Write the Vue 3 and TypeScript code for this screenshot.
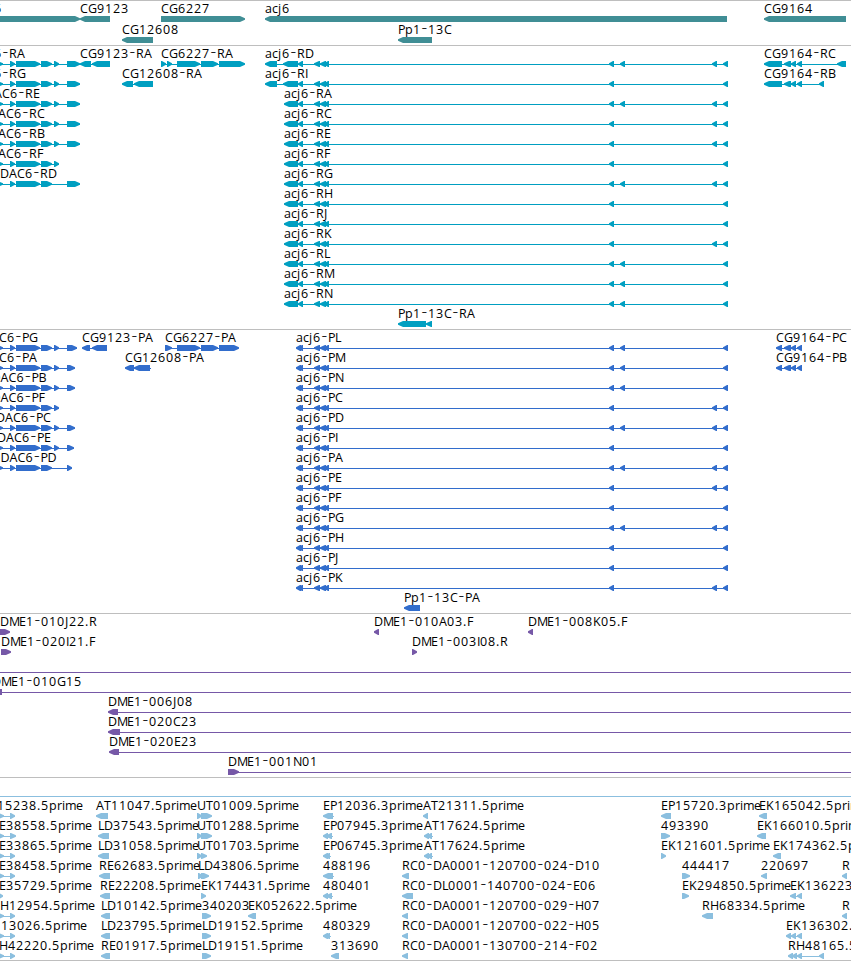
<script setup lang="ts">
type Span = [number, number]

interface Feature {
  row: number
  dir: 'l' | 'r'
  label: string
  x: number
  blocks: Span[]
  line?: Span
}

interface Track {
  name: string
  height: number
  baseline: number
  pitch: number
  features: Feature[]
}

interface Run {
  text: string
  xs: string
  dash: boolean
}

// Pen advance of each glyph, in pixels
const ADVANCE: Record<string, number> = {
  A: 8, B: 7, C: 8, D: 9, E: 7, F: 7, G: 9, H: 9, I: 3, J: 4, K: 8, L: 6, M: 10, N: 9,
  P: 7, R: 8, T: 7, U: 9, a: 7, c: 6, j: 4, p: 8, r: 5, i: 3, m: 11, e: 7, '-': 7, '.': 4,
}

// Splits a label at its hyphens, which are set in a larger size, and places every glyph
function runs(label: string, start: number): Run[] {
  let pen = start
  return label.split(/(-)/).filter(Boolean).map((text) => {
    const dash = text === '-'
    const xs = [...text]
      .map((ch) => {
        const at = pen
        pen += ADVANCE[ch] ?? 8
        return dash ? at + 0.6 : at
      })
      .join(' ')
    return { text, xs, dash }
  })
}

function arrow([a, b]: Span, dir: 'l' | 'r', y: number): string {
  const head = Math.min(5, b - a - 1)
  const tip = dir === 'l' ? a : b
  const neck = dir === 'l' ? a + head : b - head
  const tail = dir === 'l' ? b : a
  return `${tip},${y + 2.2} ${neck},${y} ${tail},${y} ${tail},${y + 6} ${neck},${y + 6} ${tip},${y + 3.8}`
}

function f(row: number, dir: 'l' | 'r', label: string, x: number, blocks: Span[], line?: Span): Feature {
  return { row, dir, label, x, blocks, line }
}

const hdacCore: Span[] = [[-3, 3], [10, 15], [16, 40], [41, 52]]
const hdacSmall: Span = [54, 59]

function hdac(row: number, suffix: string, x: number, small: boolean, last?: Span): Feature {
  const blocks = [...hdacCore]
  if (small) blocks.push(hdacSmall)
  if (last) blocks.push(last)
  return f(row, 'r', `HDAC6-${suffix}`, x, blocks, [0, blocks[blocks.length - 1][1]])
}

const exonSpan: Record<string, Span> = { a: [609, 614], b: [620, 625], c: [712, 717], d: [723, 728] }
const acjMid: Span[] = [[314, 320], [320, 326], [324, 329]]

function acj(row: number, suffix: string, exons: string, x: number, head: Span[]): Feature {
  return f(row, 'l', `acj6-${suffix}`, x, [...head, ...acjMid, ...[...exons].map((e) => exonSpan[e])], [x + 3, 728])
}

const longHead: Span[] = [[265, 277], [283, 298], [298, 303]]
const shortHead: Span[] = [[284, 298], [298, 303]]
const codingHead: Span[] = [[296, 301], [298, 303]]

const acjRna: [string, string][] = [
  ['RD', 'abcd'], ['RI', 'ad'], ['RA', 'abcd'], ['RC', 'acd'], ['RE', 'acd'], ['RF', 'ad'], ['RG', 'abcd'],
  ['RH', 'ad'], ['RJ', 'ad'], ['RK', 'acd'], ['RL', 'abd'], ['RM', 'abd'], ['RN', 'abd'],
]
const acjProtein: [string, string][] = [
  ['PL', 'abd'], ['PM', 'abd'], ['PN', 'abd'], ['PC', 'acd'], ['PD', 'abcd'], ['PI', 'ad'], ['PA', 'abcd'],
  ['PE', 'acd'], ['PF', 'ad'], ['PG', 'abcd'], ['PH', 'ad'], ['PJ', 'ad'], ['PK', 'acd'],
]

const cgTail: Span[] = [[784, 791], [791, 796], [797, 802]]

const tracks: Track[] = [
  {
    name: 'gene', height: 45, baseline: 13, pitch: 21,
    features: [
      f(0, 'r', 'HDAC6', -40, [[-5, 80]]),
      f(0, 'l', 'CG9123', 80, [[80, 110]]),
      f(1, 'l', 'CG12608', 122, [[122, 153]]),
      f(0, 'r', 'CG6227', 161, [[161, 245]]),
      f(0, 'l', 'acj6', 265, [[265, 727]]),
      f(1, 'l', 'Pp1-13C', 398, [[398, 432]]),
      f(0, 'l', 'CG9164', 764, [[764, 846]]),
    ],
  },
  {
    name: 'rna', height: 284, baseline: 13, pitch: 20,
    features: [
      hdac(0, 'RA', -40, true, [67, 80]),
      hdac(1, 'RG', -40, true, [67, 80]),
      hdac(2, 'RE', -24, true, [67, 80]),
      hdac(3, 'RC', -20, true, [67, 80]),
      hdac(4, 'RB', -20, true, [67, 80]),
      hdac(5, 'RF', -20, true),
      hdac(6, 'RD', -9, false, [67, 80]),
      f(0, 'l', 'CG9123-RA', 80, [[80, 91], [92, 110]], [80, 110]),
      f(1, 'l', 'CG12608-RA', 122, [[122, 133], [134, 153]], [125, 153]),
      f(0, 'r', 'CG6227-RA', 161, [[161, 166], [167, 172], [177, 200], [201, 218], [219, 245]], [161, 243]),
      ...acjRna.map(([s, e], i) => acj(i, s, e, i < 2 ? 265 : 284, i < 2 ? longHead : shortHead)),
      f(13, 'l', 'Pp1-13C-RA', 398, [[398, 426], [426, 432]]),
      f(0, 'l', 'CG9164-RC', 764, [[764, 782], ...cgTail, [837, 846]], [767, 846]),
      f(1, 'l', 'CG9164-RB', 764, [[764, 782], ...cgTail, [819, 824]], [767, 824]),
    ],
  },
  {
    name: 'protein', height: 284, baseline: 13, pitch: 20,
    features: [
      hdac(0, 'PG', -27, true, [67, 77]),
      hdac(1, 'PA', -27, true, [67, 75]),
      hdac(2, 'PB', -17.5, true, [67, 75]),
      hdac(3, 'PF', -17.5, true),
      hdac(4, 'PC', -13, true, [67, 75]),
      hdac(5, 'PE', -12, true, [67, 74]),
      hdac(6, 'PD', -8.5, false, [67, 72]),
      f(0, 'l', 'CG9123-PA', 82, [[82, 90], [92, 107]], [85, 107]),
      f(1, 'l', 'CG12608-PA', 125, [[125, 134], [134, 150]], [128, 151]),
      f(0, 'r', 'CG6227-PA', 165, [[165, 172], [177, 200], [201, 218], [219, 239]], [165, 237]),
      ...acjProtein.map(([s, e], i) => acj(i, s, e, 296, codingHead)),
      f(13, 'l', 'Pp1-13C-PA', 404, [[404, 420]]),
      f(0, 'l', 'CG9164-PC', 776, [[776, 782], ...cgTail], [779, 802]),
      f(1, 'l', 'CG9164-PB', 776, [[776, 782], ...cgTail], [779, 802]),
    ],
  },
  {
    name: 'bac', height: 164, baseline: 13, pitch: 20,
    features: [
      f(0, 'r', 'DME1-010J22.R', 0, [[-1, 10]]),
      f(1, 'r', 'DME1-020I21.F', 1, [[1, 11]]),
      f(0, 'l', 'DME1-010A03.F', 374, [[374, 379]]),
      f(1, 'r', 'DME1-003I08.R', 412, [[412, 417]]),
      f(0, 'l', 'DME1-008K05.F', 528, [[528, 533]]),
      f(2, 'r', '', 0, [], [0, 851]),
      f(3, 'l', 'DME1-010G15', -8, [[-8, 2]], [0, 851]),
      f(4, 'l', 'DME1-006J08', 108, [[108, 118]], [110, 851]),
      f(5, 'l', 'DME1-020C23', 108, [[108, 120]], [110, 851]),
      f(6, 'l', 'DME1-020E23', 109, [[109, 119]], [111, 851]),
      f(7, 'r', 'DME1-001N01', 228, [[228, 239]], [228, 851]),
    ],
  },
  {
    name: 'est', height: 183, baseline: 33, pitch: 20,
    features: [
      f(0, 'r', '15238.5prime', -3, [[-2, 4], [10, 15]], [0, 15]),
      f(1, 'r', 'RE38558.5prime', -9, [[-2, 4], [10, 16]], [0, 15]),
      f(2, 'r', 'RE33865.5prime', -9, [[-2, 4], [10, 15]], [0, 15]),
      f(3, 'r', 'RE38458.5prime', -9, [[-2, 4], [10, 15]], [0, 15]),
      f(4, 'r', 'RE35729.5prime', -9, [[-2, 3]]),
      f(5, 'r', 'RH12954.5prime', -8, [[-2, 4], [10, 15]], [0, 15]),
      f(6, 'r', '13026.5prime', 1, [[-2, 4], [10, 15]], [0, 15]),
      f(7, 'r', 'RH42220.5prime', -9, [[-2, 4], [10, 15]], [0, 15]),
      f(0, 'l', 'AT11047.5prime', 96, [[96, 108]]),
      f(1, 'l', 'LD37543.5prime', 98, [[98, 109]]),
      f(2, 'l', 'LD31058.5prime', 98, [[98, 109]]),
      f(3, 'l', 'RE62683.5prime', 99, [[99, 110]]),
      f(4, 'l', 'RE22208.5prime', 100, [[100, 110]]),
      f(5, 'l', 'LD10142.5prime', 101, [[101, 110]]),
      f(6, 'l', 'LD23795.5prime', 101, [[101, 110]]),
      f(7, 'l', 'RE01917.5prime', 101, [[101, 110]]),
      f(0, 'r', 'UT01009.5prime', 197, [[197, 202], [201, 212]]),
      f(1, 'r', 'UT01288.5prime', 197, [[197, 202], [201, 212]]),
      f(2, 'r', 'UT01703.5prime', 197, [[197, 202], [201, 207]]),
      f(3, 'r', 'LD43806.5prime', 198, [[198, 203], [201, 209]]),
      f(4, 'r', 'EK174431.5prime', 201, [[201, 206]]),
      f(5, 'r', '340203', 202, [[202, 211]]),
      f(6, 'r', 'LD19152.5prime', 202, [[202, 211]]),
      f(7, 'r', 'LD19151.5prime', 202, [[202, 211]]),
      f(5, 'l', 'EK052622.5prime', 248, [[248, 256]]),
      f(0, 'l', 'EP12036.3prime', 323, [[323, 333]], [326, 334]),
      f(1, 'l', 'EP07945.3prime', 323, [[323, 328], [326, 332]], [326, 333]),
      f(2, 'l', 'EP06745.3prime', 323, [[323, 328], [325, 330]], [326, 331]),
      f(3, 'l', '488196', 323, [[323, 333]], [326, 334]),
      f(4, 'l', '480401', 323, [[323, 328], [326, 332]], [326, 333]),
      f(6, 'l', '480329', 323, [[323, 328], [325, 330]], [326, 331]),
      f(7, 'l', '313690', 331, [[331, 339]]),
      f(0, 'l', 'AT21311.5prime', 423, [[423, 428]]),
      f(1, 'l', 'AT17624.5prime', 424, [[424, 429], [427, 432]], [427, 433]),
      f(2, 'l', 'AT17624.5prime', 424, [[424, 429], [427, 432]], [427, 433]),
      f(3, 'l', 'RC0-DA0001-120700-024-D10', 402, [[402, 409]]),
      f(4, 'l', 'RC0-DL0001-140700-024-E06', 402, [[402, 413]]),
      f(5, 'l', 'RC0-DA0001-120700-029-H07', 402, [[402, 408]]),
      f(6, 'l', 'RC0-DA0001-120700-022-H05', 402, [[402, 408]]),
      f(7, 'l', 'RC0-DA0001-130700-214-F02', 402, [[402, 408]]),
      f(0, 'l', 'EP15720.3prime', 661, [[661, 671]]),
      f(1, 'r', '493390', 661, [[661, 670]]),
      f(2, 'r', 'EK121601.5prime', 661, [[661, 666]]),
      f(3, 'r', '444417', 682, [[682, 690]]),
      f(4, 'r', 'EK294850.5prime', 682, [[682, 689]]),
      f(5, 'l', 'RH68334.5prime', 702, [[702, 713]]),
      f(0, 'l', 'EK165042.5prime', 759, [[759, 767]]),
      f(1, 'l', 'EK166010.5prime', 757, [[757, 766]]),
      f(2, 'l', 'EK174362.5prime', 773, [[773, 781]]),
      f(3, 'l', '220697', 761, [[761, 767]]),
      f(4, 'l', 'EK136223.5prime', 790, [[790, 796], [797, 802]], [793, 802]),
      f(6, 'l', 'EK136302.5prime', 786, [[786, 791], [791, 796], [797, 802]], [789, 802]),
      f(7, 'l', 'RH48165.5prime', 788, [[788, 793], [792, 797], [797, 802], [819, 824]], [791, 824]),
      f(3, 'l', 'R', 842, [[842, 847]]),
      f(5, 'l', 'R', 842, [[842, 847]]),
    ],
  },
]
</script>

<template>
  <main class="browser">
    <section v-for="t in tracks" :key="t.name" class="track" :class="t.name">
      <svg class="canvas" width="851" :height="t.height" :viewBox="`0 0 851 ${t.height}`">
        <rect v-if="t.name === 'est'" class="mark" x="0" y="19" width="851" height="1" />
        <g v-for="(ft, i) in t.features" :key="i">
          <rect
            v-if="ft.line"
            class="mark"
            :x="ft.line[0]"
            :y="t.baseline + ft.row * t.pitch + 6"
            :width="ft.line[1] - ft.line[0]"
            height="1"
          />
          <polygon
            v-for="(b, j) in ft.blocks"
            :key="j"
            class="mark"
            :points="arrow(b, ft.dir, t.baseline + ft.row * t.pitch + 3)"
          />
          <text v-if="ft.label" class="label" :y="t.baseline + ft.row * t.pitch"><tspan v-for="(r, k) in runs(ft.label, ft.x)" :key="k" :class="{ dash: r.dash }" :x="r.xs">{{ r.text }}</tspan></text>
        </g>
      </svg>
    </section>
  </main>
</template>

<style>
body {
  background: #fff;
  overflow: hidden;
}
</style>

<style scoped>
.browser {
  display: flex;
  flex-direction: column;
  width: 851px;
  height: 961px;
  box-sizing: border-box;
  overflow: hidden;
  background: #fff;
  border-bottom: 1px solid #bebebe;
}
.track {
  flex: none;
  box-shadow: inset 0 1px 0 #bebebe;
}
.canvas {
  display: block;
  overflow: hidden;
}
.label {
  font-family: "Open Sans", "Noto Sans", sans-serif;
  font-size: 12.5px;
  fill: #000;
}
.dash {
  font-size: 17.5px;
  font-weight: 300;
}
.gene .mark { fill: #408e95; }
.rna .mark { fill: #009fc1; }
.protein .mark { fill: #326dcc; }
.bac .mark { fill: #7658a7; }
.est .mark { fill: #8bbfdf; }
</style>
